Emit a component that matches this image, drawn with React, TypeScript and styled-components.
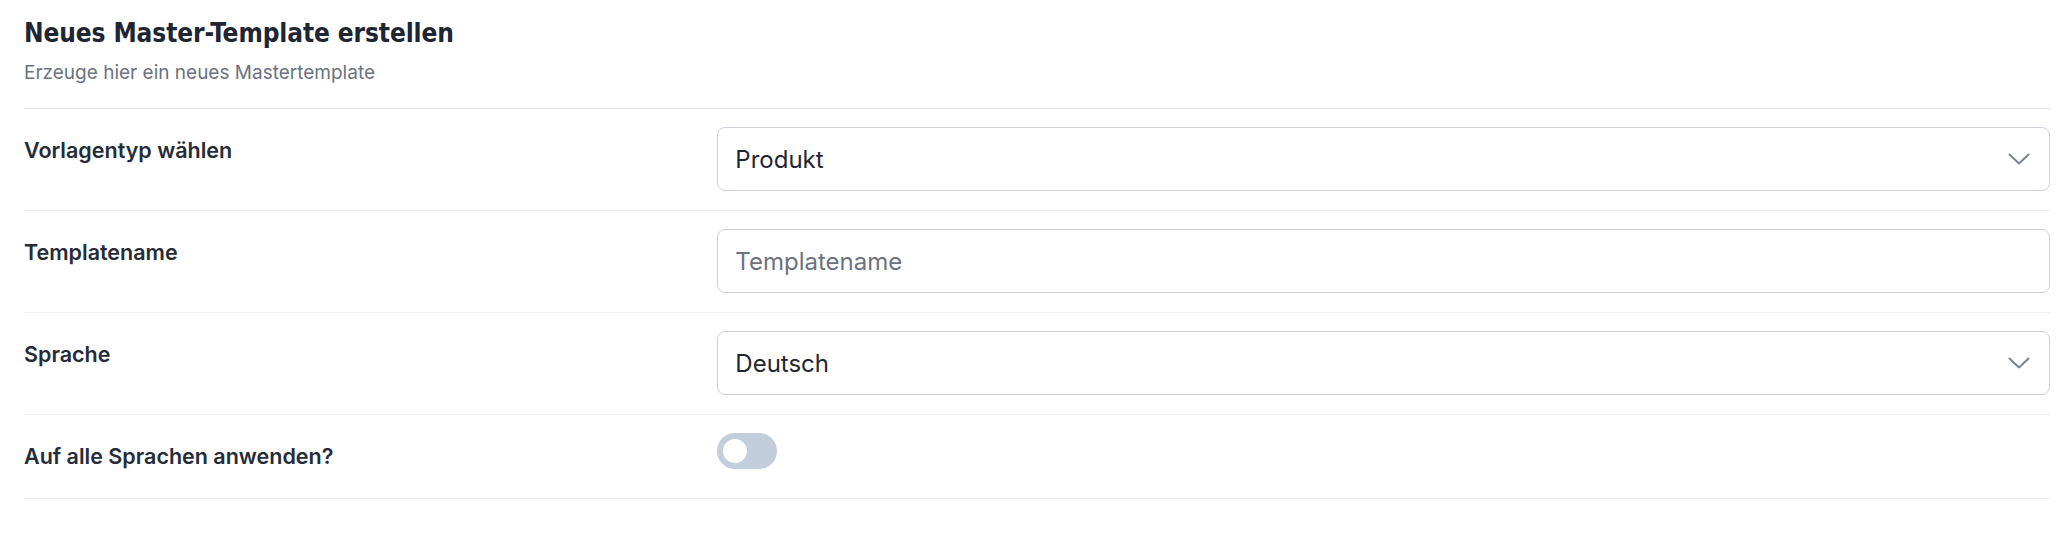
import { FC } from "react";
import styled, { createGlobalStyle } from "styled-components";

const GlobalStyle = createGlobalStyle`
  html, body {
    margin: 0;
    padding: 0;
    background: #ffffff;
  }
  body {
    font-family: Inter, "Noto Sans", sans-serif;
    color: #1f2633;
  }
`;

const Page = styled.div`
  padding: 0 20px 0 24px;
`;

const Header = styled.header`
  padding: 15px 0 22px;
  border-bottom: 1px solid #e3e6ea;
`;

const Title = styled.h1`
  margin: 0;
  font-family: "Liberation Sans Narrow", "DejaVu Sans Condensed", sans-serif;
  font-stretch: condensed;
  font-size: 26px;
  line-height: 36px;
  font-weight: 700;
  letter-spacing: -0.1px;
  color: #1e2533;
`;

const Subtitle = styled.p`
  margin: 9px 0 0;
  font-size: 19px;
  line-height: 26px;
  color: #6b7280;
`;

const Row = styled.div`
  display: grid;
  grid-template-columns: minmax(0, 1fr) minmax(0, 2fr);
  column-gap: 27px;
  align-items: start;
  padding: 18px 0 19px;
  border-bottom: 1px solid #eef0f3;
`;

const Label = styled.label`
  margin: 9px 0;
  font-size: 21.5px;
  line-height: 28px;
  font-weight: 600;
  color: #252c38;
`;

const Field = styled.div<{ $placeholder?: boolean }>`
  display: flex;
  align-items: center;
  justify-content: space-between;
  box-sizing: border-box;
  height: 64px;
  padding: 0 19px 0 17px;
  border: 1px solid #cdd2d8;
  border-radius: 8px;
  background: #ffffff;
  font-size: 24px;
  color: ${({ $placeholder }) => ($placeholder ? "#6b7280" : "#1f2633")};
`;

const Chevron = styled.svg`
  width: 22px;
  height: 12px;
  flex-shrink: 0;
`;

const Toggle = styled.div<{ $on?: boolean }>`
  position: relative;
  width: 60px;
  height: 36px;
  border-radius: 18px;
  background: ${({ $on }) => ($on ? "#2563eb" : "#c3cedc")};
`;

const Knob = styled.span<{ $on?: boolean }>`
  position: absolute;
  top: 6px;
  left: ${({ $on }) => ($on ? "30px" : "6px")};
  width: 24px;
  height: 24px;
  border-radius: 50%;
  background: #ffffff;
`;

const SelectField: FC<{ value: string }> = ({ value }) => (
  <Field>
    <span>{value}</span>
    <Chevron viewBox="0 0 22 12" fill="none">
      <path
        d="M1.5 1.5L11 10.5L20.5 1.5"
        stroke="#7b838f"
        strokeWidth="2"
        strokeLinecap="round"
        strokeLinejoin="round"
      />
    </Chevron>
  </Field>
);

const App: FC = () => {
  return (
    <>
      <GlobalStyle />
      <Page>
        <Header>
          <Title>Neues Master-Template erstellen</Title>
          <Subtitle>Erzeuge hier ein neues Mastertemplate</Subtitle>
        </Header>
        <Row>
          <Label>Vorlagentyp wählen</Label>
          <SelectField value="Produkt" />
        </Row>
        <Row>
          <Label>Templatename</Label>
          <Field $placeholder>Templatename</Field>
        </Row>
        <Row>
          <Label>Sprache</Label>
          <SelectField value="Deutsch" />
        </Row>
        <Row>
          <Label>Auf alle Sprachen anwenden?</Label>
          <Toggle>
            <Knob />
          </Toggle>
        </Row>
      </Page>
    </>
  );
};

export default App;
